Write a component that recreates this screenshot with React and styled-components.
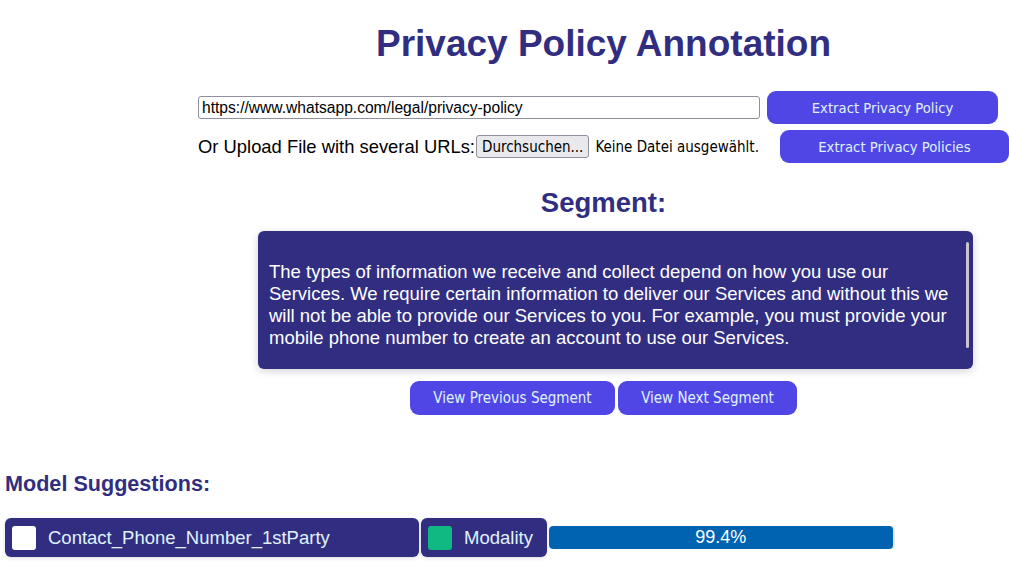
import React from 'react';
import styled, { createGlobalStyle } from 'styled-components';

const GlobalStyle = createGlobalStyle`
  body {
    margin: 0;
    background: #ffffff;
    font-family: "Liberation Sans", Arial, sans-serif;
    overflow: hidden;
  }
`;

const Page = styled.div`
  width: 1009px;
  height: 581px;
  overflow: hidden;
`;

const Main = styled.div`
  padding-left: 198px;
  display: flex;
  flex-direction: column;
`;

const Title = styled.h1`
  margin: 23px 0 0;
  font-size: 37px;
  line-height: 42px;
  font-weight: 700;
  color: #312e81;
  text-align: center;
`;

const UrlRow = styled.div`
  display: flex;
  align-items: center;
  margin-top: 26px;
`;

const UrlInput = styled.input`
  box-sizing: border-box;
  width: 562px;
  height: 23px;
  padding: 0 3px;
  border: 1px solid #8f8f9d;
  border-radius: 3px;
  font-family: "Liberation Sans", Arial, sans-serif;
  font-size: 15.6px;
  color: #000;
`;

const ActionButton = styled.button`
  box-sizing: border-box;
  flex-shrink: 0;
  width: ${p => p.w}px;
  height: 33px;
  margin-left: ${p => p.ml}px;
  border: 0;
  border-radius: 9px;
  background: #4f46e5;
  color: #e0f2fe;
  font-family: "DejaVu Sans Condensed", "DejaVu Sans", sans-serif;
  font-size: 14.7px;
  white-space: nowrap;
  cursor: pointer;
`;

const FileRow = styled.div`
  display: flex;
  align-items: center;
  margin-top: 6px;
  white-space: nowrap;
  & > * {
    flex-shrink: 0;
  }
`;

const FileLabel = styled.span`
  font-size: 18.4px;
  color: #000;
`;

const FileButton = styled.span`
  box-sizing: border-box;
  height: 23px;
  margin-left: 1px;
  padding: 0 5px;
  display: inline-flex;
  align-items: center;
  border: 1px solid #8f8f9d;
  border-radius: 3px;
  background: #e9e9ed;
  font-family: "DejaVu Sans Condensed", "DejaVu Sans", sans-serif;
  font-size: 15px;
  color: #000;
`;

const FileStatus = styled.span`
  margin-left: 6px;
  font-family: "DejaVu Sans Condensed", "DejaVu Sans", sans-serif;
  font-size: 15px;
  color: #000;
`;

const SegmentHeading = styled.h2`
  margin: 24px 0 0;
  font-size: 27.5px;
  line-height: 31px;
  font-weight: 700;
  color: #312e81;
  text-align: center;
`;

const SegmentBox = styled.div`
  box-sizing: border-box;
  width: 715px;
  height: 138px;
  margin: 13px 0 0 60px;
  padding: 30px 24px 20px 11px;
  position: relative;
  background: #312e81;
  border-radius: 6px;
  box-shadow: 0 2px 8px rgba(0, 0, 0, 0.18);
  color: #ffffff;
  font-size: 18.5px;
  line-height: 22px;
`;

const ScrollThumb = styled.div`
  position: absolute;
  right: 4px;
  top: 11px;
  width: 3px;
  height: 106px;
  border-radius: 2px;
  background: #c9c4cf;
`;

const NavRow = styled.div`
  display: flex;
  justify-content: center;
  gap: 3px;
  margin-top: 12px;
`;

const NavButton = styled.button`
  box-sizing: border-box;
  width: ${p => p.w}px;
  height: 34px;
  border: 0;
  border-radius: 9px;
  background: #4f46e5;
  color: #e0f2fe;
  font-family: "DejaVu Sans Condensed", "DejaVu Sans", sans-serif;
  font-size: 15px;
`;

const SuggestionsTitle = styled.h3`
  margin: 56px 0 0 5px;
  font-size: 21.6px;
  line-height: 25px;
  font-weight: 700;
  color: #312e81;
`;

const SuggestionRow = styled.div`
  display: flex;
  align-items: center;
  gap: 2px;
  margin: 22px 0 0 5px;
`;

const Chip = styled.div`
  box-sizing: border-box;
  ${p => (p.w ? `width: ${p.w}px;` : '')}
  height: 39px;
  padding: 0 14px 0 7px;
  display: flex;
  align-items: center;
  gap: 12px;
  background: #312e81;
  border-radius: 6px;
  box-shadow: 0 1px 4px rgba(0, 0, 0, 0.15);
  color: #e0f2fe;
  font-size: 18.5px;
`;

const Swatch = styled.span`
  width: 24px;
  height: 24px;
  border-radius: 3px;
  background: ${p => p.color};
  flex-shrink: 0;
`;

const ScoreBar = styled.div`
  box-sizing: border-box;
  width: 346px;
  height: 23px;
  border-radius: 4px;
  background: #e5e7eb;
  overflow: hidden;
  display: flex;
`;

const ScoreFill = styled.div`
  height: 100%;
  background: #0063b2;
  color: #ffffff;
  font-size: 18px;
  display: flex;
  align-items: center;
  justify-content: center;
  border-radius: 4px;
`;

export default function App() {
  const score = 99.4;
  return (
    <Page>
      <GlobalStyle />
      <Main>
        <Title>Privacy Policy Annotation</Title>
        <UrlRow>
          <UrlInput defaultValue="https://www.whatsapp.com/legal/privacy-policy" />
          <ActionButton w={231} ml={7}>Extract Privacy Policy</ActionButton>
        </UrlRow>
        <FileRow>
          <FileLabel>Or Upload File with several URLs:</FileLabel>
          <FileButton>Durchsuchen...</FileButton>
          <FileStatus>Keine Datei ausgewählt.</FileStatus>
          <ActionButton w={229} ml={21}>Extract Privacy Policies</ActionButton>
        </FileRow>
        <SegmentHeading>Segment:</SegmentHeading>
        <SegmentBox>
          The types of information we receive and collect depend on how you use our Services. We require certain information to deliver our Services and without this we will not be able to provide our Services to you. For example, you must provide your mobile phone number to create an account to use our Services.
          <ScrollThumb />
        </SegmentBox>
        <NavRow>
          <NavButton w={205}>View Previous Segment</NavButton>
          <NavButton w={179}>View Next Segment</NavButton>
        </NavRow>
      </Main>
      <SuggestionsTitle>Model Suggestions:</SuggestionsTitle>
      <SuggestionRow>
        <Chip w={414}>
          <Swatch color="#ffffff" />
          Contact_Phone_Number_1stParty
        </Chip>
        <Chip>
          <Swatch color="#10b981" />
          Modality
        </Chip>
        <ScoreBar>
          <ScoreFill style={{ width: `${score}%` }}>{score}%</ScoreFill>
        </ScoreBar>
      </SuggestionRow>
    </Page>
  );
}
